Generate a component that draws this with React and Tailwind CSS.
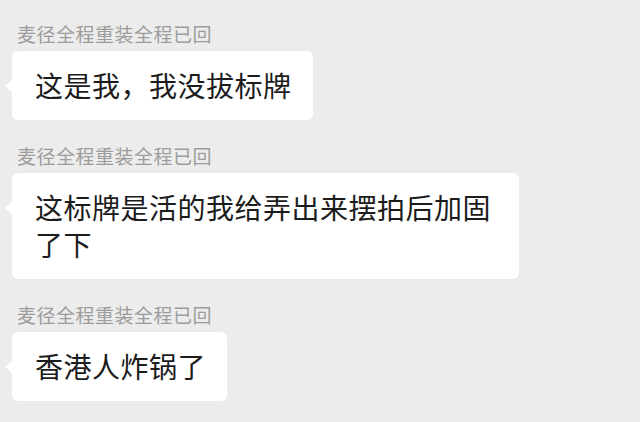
const messages = [
  { name: "麦径全程重装全程已回", text: "这是我，我没拔标牌" },
  { name: "麦径全程重装全程已回", text: "这标牌是活的我给弄出来摆拍后加固了下" },
  { name: "麦径全程重装全程已回", text: "香港人炸锅了" },
];

function Bubble({ name, text }) {
  return (
    <div className="flex flex-col items-start">
      <div className="pl-[17px] h-[22px] leading-[22px] text-[19px] tracking-[0.5px] text-[#9c9c9c]">
        {name}
      </div>
      <div className="relative mt-[6px] ml-[12px] max-w-[507px] rounded-[6px] bg-white pl-[23px] pr-[21px] py-4 text-[28px] leading-[37px] tracking-[0.5px] text-[#1c1c1c]">
        <span className="absolute left-[-7px] top-[29px] h-0 w-0 border-y-[6px] border-r-[7px] border-y-transparent border-r-white" />
        {text}
      </div>
    </div>
  );
}

export default function App() {
  return (
    <div
      className="w-[640px] h-[422px] overflow-hidden bg-[#ececec] pt-[23px] flex flex-col gap-[25px]"
      style={{ fontFamily: '"Noto Sans CJK SC", "Noto Sans CJK TC", sans-serif' }}
    >
      {messages.map((m, i) => (
        <Bubble key={i} name={m.name} text={m.text} />
      ))}
    </div>
  );
}
